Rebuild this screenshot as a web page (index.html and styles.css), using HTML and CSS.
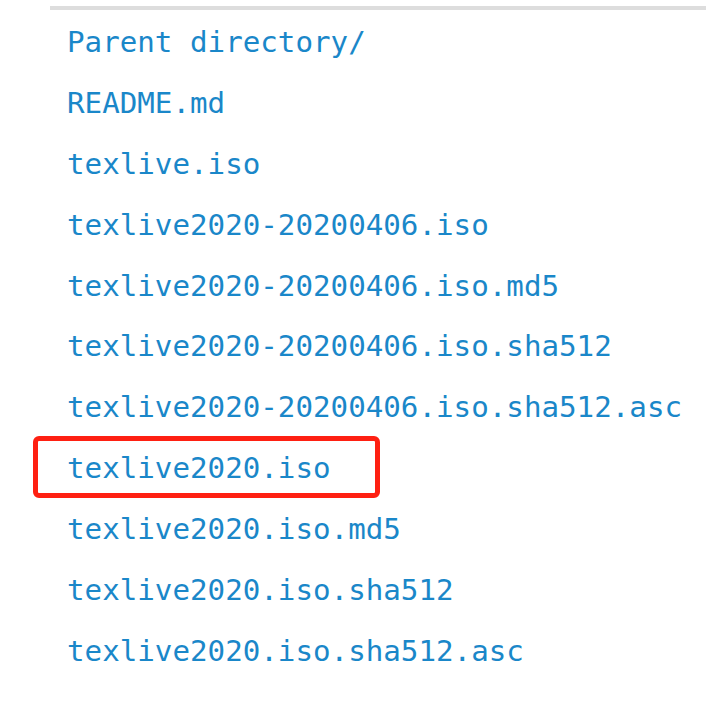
FILE: index.html
```html
<!DOCTYPE html>
<html>
<head>
<meta charset="utf-8">
<link rel="stylesheet" href="styles.css">
</head>
<body>
<div class="listing">
  <ul class="files">
    <li><a href="#">Parent directory/</a></li>
    <li><a href="#">README.md</a></li>
    <li><a href="#">texlive.iso</a></li>
    <li><a href="#">texlive2020-20200406.iso</a></li>
    <li><a href="#">texlive2020-20200406.iso.md5</a></li>
    <li><a href="#">texlive2020-20200406.iso.sha512</a></li>
    <li><a href="#">texlive2020-20200406.iso.sha512.asc</a></li>
    <li class="marked"><a href="#">texlive2020.iso</a></li>
    <li><a href="#">texlive2020.iso.md5</a></li>
    <li><a href="#">texlive2020.iso.sha512</a></li>
    <li><a href="#">texlive2020.iso.sha512.asc</a></li>
  </ul>
</div>
</body>
</html>
```
FILE: styles.css
```css
html, body {
  margin: 0;
  padding: 0;
  background: #ffffff;
}
body {
  padding-top: 6px;
}
.listing {
  margin-left: 50px;
  border-top: 4px solid #dddddd;
}
.files {
  list-style: none;
  margin: 0;
  padding: 2px 0 0 17px;
  font-family: "DejaVu Sans Mono", "Liberation Mono", monospace;
  font-size: 29.2px;
  line-height: 60.9px;
}
.files li {
  height: 60.9px;
}
.files a {
  color: #1a87c9;
  text-decoration: none;
}
.marked {
  position: relative;
}
.marked::before {
  content: "";
  position: absolute;
  left: -34px;
  top: -2px;
  width: 337px;
  height: 52px;
  border: 5px solid #fe2012;
  border-radius: 6px;
}
```
